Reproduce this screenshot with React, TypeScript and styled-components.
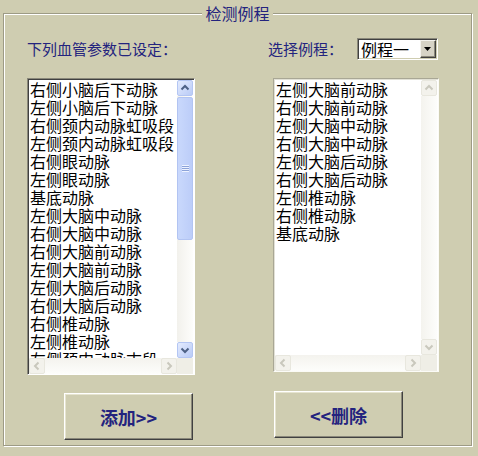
import styled, { createGlobalStyle } from 'styled-components'

const FACE = '#cfcdb1'
const NAVY = '#23237e'
const CJK = `"Noto Sans CJK SC", "Noto Sans", sans-serif`

const leftItems = [
  '右侧小脑后下动脉',
  '左侧小脑后下动脉',
  '右侧颈内动脉虹吸段',
  '左侧颈内动脉虹吸段',
  '右侧眼动脉',
  '左侧眼动脉',
  '基底动脉',
  '左侧大脑中动脉',
  '右侧大脑中动脉',
  '右侧大脑前动脉',
  '左侧大脑前动脉',
  '左侧大脑后动脉',
  '右侧大脑后动脉',
  '右侧椎动脉',
  '左侧椎动脉',
  '左侧颈内动脉末段',
]

const rightItems = [
  '左侧大脑前动脉',
  '右侧大脑前动脉',
  '左侧大脑中动脉',
  '右侧大脑中动脉',
  '左侧大脑后动脉',
  '右侧大脑后动脉',
  '左侧椎动脉',
  '右侧椎动脉',
  '基底动脉',
]

type Dir = 'up' | 'down' | 'left' | 'right'

const chevrons: Record<Dir, string> = {
  up: 'M4.5 9.5 L8 6 L11.5 9.5',
  down: 'M4.5 6.5 L8 10 L11.5 6.5',
  left: 'M9.5 4.5 L6 8 L9.5 11.5',
  right: 'M6.5 4.5 L10 8 L6.5 11.5',
}

function ArrowButton({ dir, off }: { dir: Dir; off?: boolean }) {
  return (
    <ScrollButton $off={off}>
      <svg width="16" height="16" viewBox="0 0 16 16">
        <path d={chevrons[dir]} fill="none" stroke={off ? '#c9c8bd' : '#4d6185'} strokeWidth="2" />
      </svg>
    </ScrollButton>
  )
}

function ListBox({ items, width, height, thumb, off }: {
  items: string[]
  width: number
  height: number
  thumb?: { top: number; size: number }
  off?: boolean
}) {
  return (
    <Box $w={width} $h={height} $off={off}>
      <Items>
        {items.map((t, i) => (
          <Item key={i}>{t}</Item>
        ))}
      </Items>
      <VBar>
        <ArrowButton dir="up" off={off} />
        <VTrack $off={off}>
          {thumb && (
            <Thumb $top={thumb.top} $size={thumb.size}>
              <Grip />
            </Thumb>
          )}
        </VTrack>
        <ArrowButton dir="down" off={off} />
      </VBar>
      <HBar>
        <ArrowButton dir="left" off />
        <HTrack />
        <ArrowButton dir="right" off />
      </HBar>
      <Corner />
    </Box>
  )
}

export default function App() {
  return (
    <>
      <Global />
      <Group>
        <Legend>检测例程</Legend>
        <Columns>
          <Column $left={23} $width={168}>
            <Header>
              <Label>下列血管参数已设定：</Label>
            </Header>
            <ListBox items={leftItems} width={168} height={297} thumb={{ top: 1, size: 143 }} />
            <Button $ml={37} $mt={18}>添加&gt;&gt;</Button>
          </Column>
          <Column $left={73} $width={171}>
            <Header>
              <Label>选择例程：</Label>
              <Select>
                <SelectText>例程一</SelectText>
                <DropButton>
                  <svg width="8" height="5" viewBox="0 0 8 5">
                    <path d="M0 0 H7 L3.5 4 Z" fill="#000" />
                  </svg>
                </DropButton>
              </Select>
            </Header>
            <ListBoxWrap>
              <ListBox items={rightItems} width={166} height={294} off />
            </ListBoxWrap>
            <Button $ml={6} $mt={19}>&lt;&lt;删除</Button>
          </Column>
        </Columns>
      </Group>
    </>
  )
}

const Global = createGlobalStyle`
  html, body {
    margin: 0;
    padding: 0;
    background: ${FACE};
    width: 478px;
    height: 456px;
    overflow: hidden;
    font-family: ${CJK};
  }
`

const Group = styled.fieldset`
  box-sizing: border-box;
  margin: 3px 0 0 3px;
  width: 469px;
  height: 443px;
  padding: 0;
  border: 1px solid #9d9b85;
  box-shadow: inset 1px 1px 0 #fff, 1px 1px 0 #fff;
  min-inline-size: 0;
`

const Legend = styled.legend`
  margin: 0 auto;
  padding: 0 3px;
  font-size: 16px;
  line-height: 20px;
  color: ${NAVY};
  background: ${FACE};
`

const Columns = styled.div`
  display: flex;
  padding-top: 15px;
`

const Column = styled.div<{ $left: number; $width: number }>`
  display: flex;
  flex-direction: column;
  margin-left: ${(p) => p.$left}px;
  width: ${(p) => p.$width}px;
`

const Header = styled.div`
  display: flex;
  align-items: center;
  justify-content: space-between;
  height: 22px;
  margin-bottom: 18px;
`

const Label = styled.span`
  font-size: 15px;
  line-height: 22px;
  color: ${NAVY};
  white-space: nowrap;
`

const Select = styled.div`
  box-sizing: border-box;
  display: flex;
  align-items: center;
  width: 81px;
  height: 22px;
  margin-right: 1px;
  background: #fff;
  border: 1px solid;
  border-color: #8a887a #fff #fff #8a887a;
  box-shadow: inset 1px 1px 0 #404040, inset -1px -1px 0 ${FACE};
`

const SelectText = styled.span`
  flex: 1;
  padding-left: 3px;
  font-size: 16px;
  line-height: 18px;
  color: #000;
`

const DropButton = styled.div`
  box-sizing: border-box;
  display: flex;
  align-items: center;
  justify-content: center;
  width: 16px;
  height: 18px;
  margin-right: 1px;
  background: #d6d3c6;
  border: 1px solid;
  border-color: #f4f3ee #404040 #404040 #f4f3ee;
  box-shadow: inset -1px -1px 0 #8a887a;
`

const ListBoxWrap = styled.div`
  margin-left: 5px;
`

const Box = styled.div<{ $w: number; $h: number; $off?: boolean }>`
  box-sizing: border-box;
  display: grid;
  grid-template-columns: 1fr 16px;
  grid-template-rows: 1fr 16px;
  width: ${(p) => p.$w}px;
  height: ${(p) => p.$h}px;
  background: #fff;
  border: 1px solid;
  border-color: ${(p) => (p.$off ? '#a9a795 #fbfbf6 #fbfbf6 #a9a795' : '#8a887a #fff #fff #8a887a')};
  box-shadow: ${(p) => (p.$off ? 'inset 1px 1px 0 #e2e1d6' : 'inset 1px 1px 0 #404040')};
  padding: 1px 1px 0 1px;
`

const Items = styled.div`
  overflow: hidden;
  padding-left: 1px;
`

const Item = styled.div`
  font-size: 16px;
  line-height: 18px;
  height: 18px;
  color: #000;
  white-space: nowrap;
`

const ScrollButton = styled.div<{ $off?: boolean }>`
  box-sizing: border-box;
  width: 16px;
  height: 16px;
  flex: none;
  display: flex;
  border-radius: 2px;
  border: 1px solid ${(p) => (p.$off ? '#e8e7de' : '#b4c6f3')};
  background: ${(p) => (p.$off ? '#f3f2ec' : 'linear-gradient(135deg, #e3ebfe, #b9cbf6)')};
  svg {
    margin: -1px;
  }
`

const VBar = styled.div`
  display: flex;
  flex-direction: column;
`

const VTrack = styled.div<{ $off?: boolean }>`
  flex: 1;
  display: flex;
  flex-direction: column;
  background: ${(p) => (p.$off ? 'linear-gradient(to right, #f4f3ee, #fdfdfb)' : 'linear-gradient(to right, #f2f1ec, #fdfdfb)')};
`

const Thumb = styled.div<{ $top: number; $size: number }>`
  box-sizing: border-box;
  display: flex;
  align-items: center;
  justify-content: center;
  margin-top: ${(p) => p.$top}px;
  height: ${(p) => p.$size}px;
  border: 1px solid #b2c4f2;
  border-radius: 2px;
  background: linear-gradient(to right, #c9d8fc, #bccdf8);
`

const Grip = styled.div`
  width: 7px;
  height: 7px;
  background: repeating-linear-gradient(to bottom, #eef3ff 0 1px, #8ca3d9 1px 2px);
`

const HBar = styled.div`
  display: flex;
  background: linear-gradient(to bottom, #f4f3ee, #fdfdfb);
`

const HTrack = styled.div`
  flex: 1;
`

const Corner = styled.div`
  background: #efeee6;
`

const Button = styled.button<{ $ml: number; $mt: number }>`
  box-sizing: border-box;
  width: 129px;
  height: 47px;
  margin: ${(p) => p.$mt}px 0 0 ${(p) => p.$ml}px;
  padding: 0;
  background: ${FACE};
  border: 1px solid;
  border-color: #fff #404040 #404040 #fff;
  box-shadow: inset -1px -1px 0 #8a887a, inset 1px 1px 0 #e6e4d0;
  font-family: ${CJK};
  font-size: 18px;
  font-weight: bold;
  color: ${NAVY};
  cursor: pointer;
`
